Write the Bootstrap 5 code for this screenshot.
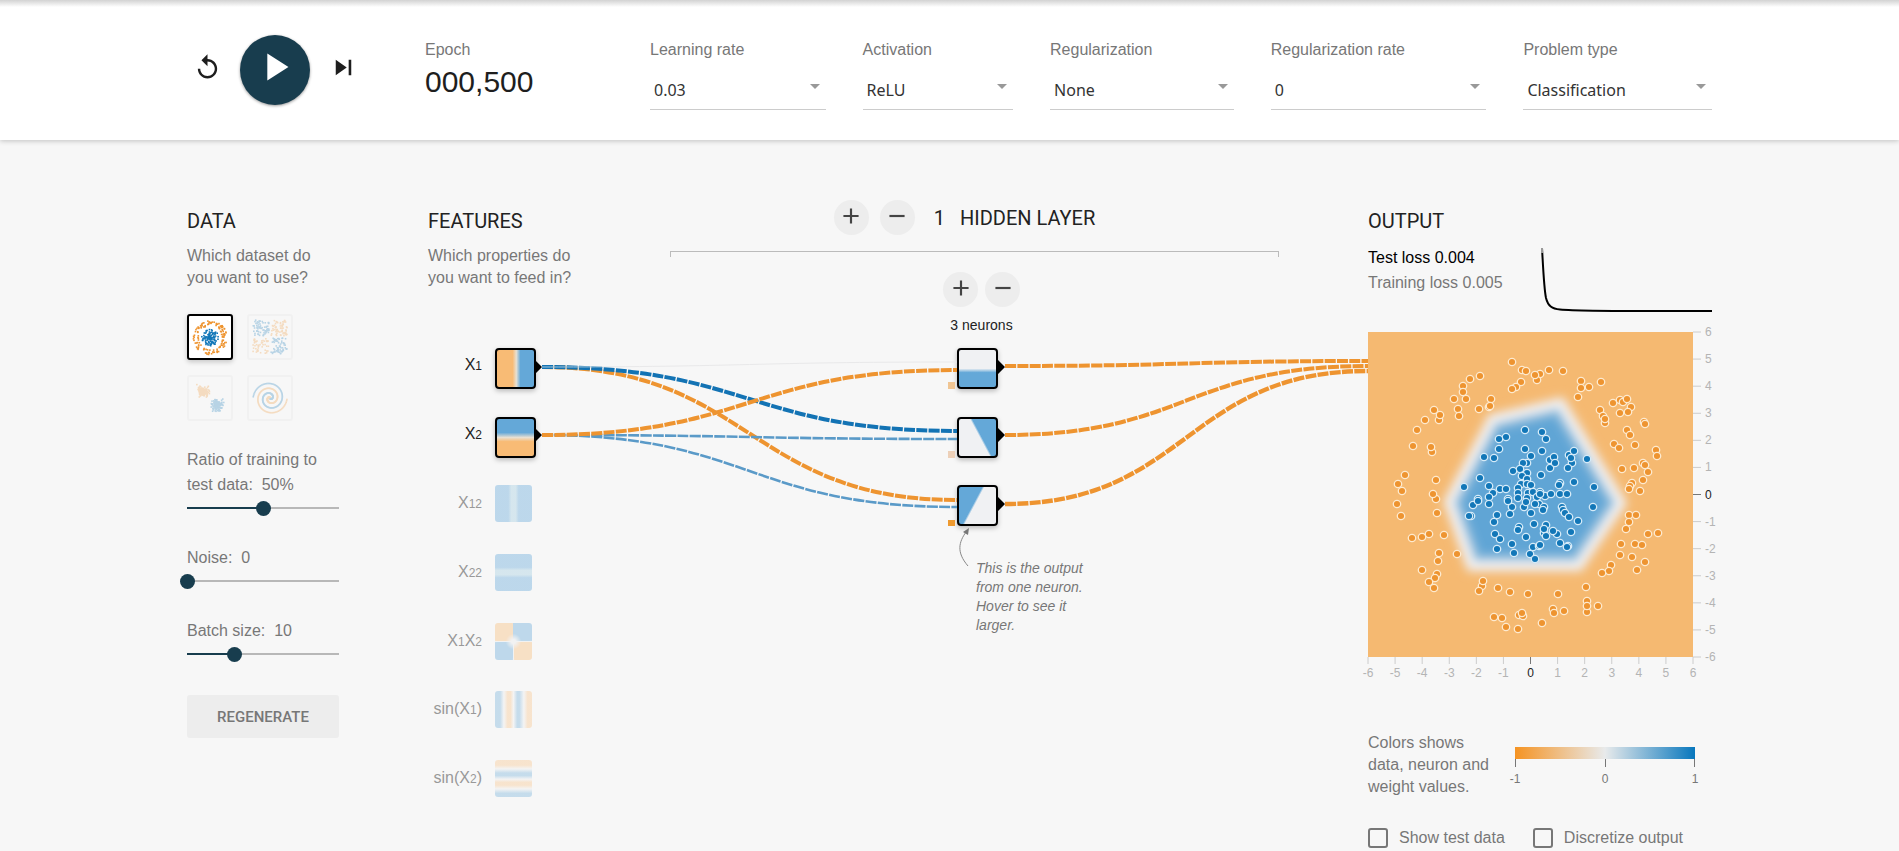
<!DOCTYPE html>
<html lang="en">
<head>
<meta charset="utf-8">
<meta name="viewport" content="width=device-width, initial-scale=1">
<title>Neural network playground</title>
<link href="https://cdn.jsdelivr.net/npm/bootstrap@5.3.0/dist/css/bootstrap.min.css" rel="stylesheet">
<style>
  body { background: #f7f7f7; color: #222; font-family: "Liberation Sans", Arial, sans-serif; font-size: 16px; line-height: 22px; overflow-x: hidden; }
  .page { max-width: 1525px; }
  .topbar { background: linear-gradient(#d2d2d2, #fff 7px); box-shadow: 0 1px 5px rgba(0,0,0,.22); height: 140px; padding-top: 35px; }
  .muted { color: #777; }
  .controls { width: 238px; height: 70px; padding-left: 6px; gap: 18px; }
  .iconbtn { border: 0; background: none; padding: 0 0 6px; line-height: 0; color: #1e1e1e; }
  .playbtn { width: 70px; height: 70px; border-radius: 50%; background: #183d4e; color: #fff; box-shadow: 0 1px 3px rgba(0,0,0,.4); }
  .epoch { width: 225px; padding-top: 4px; }
  .epoch output { display: block; font-size: 30px; line-height: 34px; color: #1e1e1e; padding-top: 4px; }
  .options { display: grid; grid-template-columns: 175fr 150fr 183fr 215fr 188fr; column-gap: 37px; padding-top: 4px; }
  .options label { display: block; margin-bottom: 10px; white-space: nowrap; }
  .options .form-select { height: 39px; padding: 0 20px 0 4px; border: 0; border-bottom: 1px solid #ccc; border-radius: 0; color: #333; font: 16px/22px "Noto Sans", sans-serif;
    background: url("data:image/svg+xml,%3Csvg xmlns='http://www.w3.org/2000/svg' viewBox='0 0 10 5'%3E%3Cpath fill='%23999' d='M0 0h10L5 5z'/%3E%3C/svg%3E") no-repeat right 6px top 13px / 10px 5px; }
  .playground { padding-top: 60px; }
  h2 { font: 400 20px/26px Roboto, sans-serif; color: #222; margin: 0 0 11px; }
  .colhead { padding-top: 8px; }
  .datacol { width: 152px; margin-right: 89px; }
  .thumbs { display: grid; grid-template-columns: 46px 46px; gap: 15px 14px; margin: 25px 0 26px; }
  .thumbbtn { width: 46px; height: 46px; padding: 0; border: 2px solid #e3e3e3; border-radius: 3px; background: #fafafa; opacity: .27; line-height: 0; }
  .thumbbtn.on { border-color: #000; background: #fff; opacity: 1; box-shadow: 0 2px 5px rgba(0,0,0,.2); }
  .thumbbtn svg { width: 100%; height: 100%; }
  .knob { margin-bottom: 29px; }
  .knob label { line-height: 25px; display: block; white-space: nowrap; }
  .knob input { appearance: none; -webkit-appearance: none; display: block; width: calc(100% + 14px); height: 16px; margin: 3px -7px 0;
    background: linear-gradient(90deg, #183d4e var(--v), #b8b8b8 var(--v)) no-repeat center / calc(100% - 14px) 2px; }
  .knob input::-webkit-slider-thumb { -webkit-appearance: none; width: 15px; height: 15px; border-radius: 50%; background: #183d4e; border: 0; }
  .regen { height: 43px; margin-top: 4px; background: #ededed; border: 0; border-radius: 3px; color: #777; font: 500 15px/20px Roboto, sans-serif; }
  .network { min-width: 0; }
  .links { left: 0; top: 0; width: 100%; height: 620px; pointer-events: none; }
  .featcol { width: 145px; white-space: nowrap; }
  .features { height: 453px; margin-top: 59px; }
  .feat { display: grid; grid-template-columns: 54px 42px; column-gap: 13px; height: 41px; padding: 0; border: 0; background: none; text-align: right; color: #222; justify-items: start; }
  .feat > span { width: 100%; line-height: 33px; font-size: 16px; }
  .feat.off > span { line-height: 35px; }
  .feat small { font-size: 12px; }
  .feat i, .neuron { display: block; width: 37px; height: 37px; border-radius: 3px; }
  .feat.off { color: #999; }
  .feat.off i { opacity: .38; }
  .feat.on i, .neuron { width: 41px; height: 41px; border: 2px solid #000; border-radius: 4px; box-shadow: 0 2px 5px rgba(0,0,0,.25); background-origin: border-box; padding: 0; }
  .fx1 { background: linear-gradient(90deg, #f8bb75 43%, #e8e0d2 52%, #64a8d8 62%); }
  .fx2 { background: linear-gradient(#64a8d8 38%, #e8e0d2 50%, #f8bb75 60%); }
  .fx11 { background: linear-gradient(90deg, #5da4d8 36%, #9fcbdf 44%, #9fcbdf 56%, #5da4d8 64%); }
  .fx22 { background: linear-gradient(#5da4d8 36%, #9fcbdf 44%, #9fcbdf 56%, #5da4d8 64%); }
  .fx12 { background: radial-gradient(circle, #e8eaeb 8%, transparent 30%), conic-gradient(#64a8d8 0 24%, #e8eaeb 25%, #f8bb75 26% 49%, #e8eaeb 50%, #64a8d8 51% 74%, #e8eaeb 75%, #f8bb75 76% 99%, #e8eaeb); }
  .fs1 { background: linear-gradient(90deg, #74b0d9 14%, #eee 24%, #f8c48a 34%, #f8c48a 42%, #eee 50%, #74b0d9 60%, #74b0d9 66%, #eee 78%, #f8c48a 88%); }
  .fs2 { background: linear-gradient(#f8c48a 14%, #eee 24%, #74b0d9 35%, #74b0d9 42%, #eee 52%, #f8c48a 60%, #f8c48a 68%, #eee 78%, #74b0d9 90%); }
  .hiddencol { margin: 0 89px 0 97px; min-width: 0; }
  .layerhead { padding-right: 20px; gap: 11px; height: 35px; }
  .layerhead h2 { margin: 0; }
  .roundbtn { width: 35px; height: 35px; border: 0; border-radius: 50%; background: #ededed; padding: 0 0 3px; line-height: 0; color: #444; flex: none; }
  .bracket { height: 6px; margin-top: 16px; border: 1px solid #bbb; border-bottom: 0; }
  .layer { width: 91px; padding-left: 14px; margin-top: 15px; }
  .layer > p { font-size: 14px; line-height: 20px; margin: 8px 0 13px; white-space: nowrap; }
  .neurons { height: 178px; margin-left: 14px; }
  .n1 { background: linear-gradient(#f0f1f3 50%, #64a8d8 61%); }
  .n2 { background: linear-gradient(62deg, #f0f1f3 54%, #64a8d8 58%); }
  .n3 { background: linear-gradient(118deg, #64a8d8 41%, #f0f1f3 45%); }
  .hint { font-size: 14px; line-height: 19px; font-style: italic; margin: 33px 0 0 33px; white-space: nowrap; }
  .outcol { width: 344px; flex: none; }
  .lossrow { height: 87px; line-height: 25px; }
  .lossrow svg, .heat, .scalebar { overflow: visible; display: block; }
  .axis { font-size: 12px; fill: #b4b4b4; }
  .legend { margin-top: 50px; }
  .legend svg { margin: 15px 17px 0 0; }
  .checks { margin-top: 30px; }
  .checks label { display: flex; align-items: center; gap: 11px; line-height: 20px; white-space: nowrap; }
  .checks .form-check-input { width: 20px; height: 20px; margin: 0; border: 2px solid #777; border-radius: 3px; background-color: transparent; }
</style>
</head>
<body>
<header class="topbar">
  <div class="page mx-auto d-flex align-items-start">
    <div class="controls d-flex align-items-center">
      <button class="iconbtn" type="button" aria-label="Reset"><svg width="29" height="29" viewBox="0 0 24 24" fill="currentColor"><path d="M12 5V1L7 6l5 5V7c3.310 0 6 2.690 6 6s-2.690 6-6 6-6-2.690-6-6H4c0 4.420 3.580 8 8 8s8-3.580 8-8-3.580-8-8-8z"/></svg></button>
      <button class="iconbtn playbtn" type="button" aria-label="Run"><svg width="46" height="46" viewBox="0 0 24 24" fill="currentColor"><path d="M8 5v14l11-7z"/></svg></button>
      <button class="iconbtn" type="button" aria-label="Step"><svg width="31" height="31" viewBox="0 0 24 24" fill="currentColor"><path d="M6 18l8.500-6L6 6v12zM16 6v12h2V6h-2z"/></svg></button>
    </div>
    <div class="epoch"><label class="muted d-block" for="epoch">Epoch</label><output id="epoch">000,500</output></div>
    <div class="options flex-grow-1">
      <div><label class="muted" for="lr">Learning rate</label><select class="form-select" id="lr"><option>0.03</option></select></div>
      <div><label class="muted" for="act">Activation</label><select class="form-select" id="act"><option>ReLU</option></select></div>
      <div><label class="muted" for="reg">Regularization</label><select class="form-select" id="reg"><option>None</option></select></div>
      <div><label class="muted" for="regrate">Regularization rate</label><select class="form-select" id="regrate"><option>0</option></select></div>
      <div><label class="muted" for="problem">Problem type</label><select class="form-select" id="problem"><option>Classification</option></select></div>
    </div>
  </div>
</header>

<main class="page mx-auto playground d-flex align-items-start">
  <section class="datacol colhead flex-shrink-0">
    <h2>DATA</h2>
    <div class="muted">Which dataset do<br>you want to use?</div>
    <div class="thumbs">
      <button class="thumbbtn on" type="button" aria-label="Circle"><svg id="t-circle" viewBox="0 0 42 42"></svg></button>
      <button class="thumbbtn" type="button" aria-label="Exclusive or"><svg id="t-xor" viewBox="0 0 42 42"></svg></button>
      <button class="thumbbtn" type="button" aria-label="Gaussian"><svg id="t-gauss" viewBox="0 0 42 42"></svg></button>
      <button class="thumbbtn" type="button" aria-label="Spiral"><svg id="t-spiral" viewBox="0 0 42 42"></svg></button>
    </div>
    <div class="knob muted"><label for="ratio">Ratio of training to<br>test data:&nbsp; 50%</label><input type="range" id="ratio" min="10" max="90" value="50" style="--v:50%"></div>
    <div class="knob muted"><label for="noise">Noise:&nbsp; 0</label><input type="range" id="noise" min="0" max="50" value="0" style="--v:0%"></div>
    <div class="knob muted"><label for="batch">Batch size:&nbsp; 10</label><input type="range" id="batch" min="1" max="30" value="10" style="--v:31%"></div>
    <button class="regen w-100" type="button">REGENERATE</button>
  </section>

  <section class="network position-relative d-flex flex-grow-1">
    <svg class="links position-absolute" viewBox="0 0 940 620" preserveAspectRatio="xMinYMin meet" fill="none">
      <g id="curves"></g>
      <g fill="#000"><path d="M107 160l7 7-7 7zM107 228l7 7-7 7zM570 160l7 7-7 7zM570 228l7 7-7 7zM570 297l7 7-7 7z"/></g>
      <path fill="#f0c593" d="M520 182h7v7h-7z"/><path fill="#edd0b8" d="M520 251h7v7h-7z"/><path fill="#ee9a30" d="M520 320h7v6h-7z"/>
      <path d="M540 366C528 352 531 342 538 332" stroke="#888"/><path fill="#777" d="M541 328l-1 7-5-3z"/>
    </svg>
    <div class="featcol colhead flex-shrink-0">
      <h2>FEATURES</h2>
      <div class="muted">Which properties do<br>you want to feed in?</div>
      <div class="features d-flex flex-column justify-content-between">
        <button type="button" class="feat on"><span>X<small>1</small></span><i class="fx1"></i></button>
        <button type="button" class="feat on"><span>X<small>2</small></span><i class="fx2"></i></button>
        <button type="button" class="feat off"><span>X<small>12</small></span><i class="fx11"></i></button>
        <button type="button" class="feat off"><span>X<small>22</small></span><i class="fx22"></i></button>
        <button type="button" class="feat off"><span>X<small>1</small>X<small>2</small></span><i class="fx12"></i></button>
        <button type="button" class="feat off"><span>sin(X<small>1</small>)</span><i class="fs1"></i></button>
        <button type="button" class="feat off"><span>sin(X<small>2</small>)</span><i class="fs2"></i></button>
      </div>
    </div>
    <div class="hiddencol flex-grow-1">
      <div class="layerhead d-flex align-items-center justify-content-center">
        <button class="roundbtn" type="button" aria-label="Add layer"><svg width="26" height="26" viewBox="0 0 24 24" stroke="currentColor" stroke-width="2"><path d="M5 12h14M12 5v14"/></svg></button>
        <button class="roundbtn" type="button" aria-label="Remove layer"><svg width="26" height="26" viewBox="0 0 24 24" stroke="currentColor" stroke-width="2"><path d="M5 12h14"/></svg></button>
        <h2 class="ms-2">1</h2><h2 class="ms-1">HIDDEN LAYER</h2>
      </div>
      <div class="bracket"></div>
      <div class="layer mx-auto">
        <div class="d-flex justify-content-between">
          <button class="roundbtn" type="button" aria-label="Add neuron"><svg width="26" height="26" viewBox="0 0 24 24" stroke="currentColor" stroke-width="2"><path d="M5 12h14M12 5v14"/></svg></button>
          <button class="roundbtn" type="button" aria-label="Remove neuron"><svg width="26" height="26" viewBox="0 0 24 24" stroke="currentColor" stroke-width="2"><path d="M5 12h14"/></svg></button>
        </div>
        <p class="text-center">3 neurons</p>
        <div class="neurons d-flex flex-column justify-content-between">
          <button class="neuron n1" type="button" aria-label="Neuron 1"></button>
          <button class="neuron n2" type="button" aria-label="Neuron 2"></button>
          <button class="neuron n3" type="button" aria-label="Neuron 3"></button>
        </div>
        <div class="hint muted">This is the output<br>from one neuron.<br>Hover to see it<br>larger.</div>
      </div>
    </div>
  </section>

  <section class="outcol colhead">
    <h2>OUTPUT</h2>
    <div class="lossrow d-flex justify-content-between">
      <div><div class="text-black">Test loss 0.004</div><div class="muted">Training loss 0.005</div></div>
      <svg width="170" height="66" viewBox="0 0 170 66" fill="none"><path d="M0 3C1 20 2 44 4 53C6 61 10 64 18 64.500C40 66.500 80 66 170 66" stroke="#000" stroke-width="2"/><path d="M0 3v5" stroke="#999" stroke-width="2"/></svg>
    </div>
    <svg class="heat" width="344" height="350" viewBox="0 0 344 350">
      <defs>
        <filter id="soft" x="-20%" y="-20%" width="140%" height="140%"><feGaussianBlur stdDeviation="4"/></filter>
        <clipPath id="inside"><path d="M82 170L125 88 192 72 252 171 210 233 104 233z"/></clipPath>
      </defs>
      <rect width="325" height="325" fill="#f5b971"/>
      <g filter="url(#soft)" stroke-linejoin="round">
        <path d="M82 170L125 88 192 72 252 171 210 233 104 233z" fill="#61a5d5" stroke="#f1cfa4" stroke-width="18"/>
        <path d="M82 170L125 88 192 72 252 171 210 233 104 233z" fill="#61a5d5" stroke="#8dbddd" stroke-width="22" clip-path="url(#inside)"/>
        <path d="M82 170L125 88 192 72 252 171 210 233 104 233z" fill="none" stroke="#eff0f1" stroke-width="8"/>
      </g>
      <g id="dots" stroke-width="1.300"></g>
      <g id="axes" class="axis"></g>
    </svg>
    <div class="legend d-flex justify-content-between muted">
      <div class="text-nowrap">Colors shows<br>data, neuron and<br>weight values.</div>
      <svg class="scalebar" width="180" height="40" viewBox="0 0 180 40">
        <defs><linearGradient id="scale"><stop offset="0" stop-color="#f59322"/><stop offset=".5" stop-color="#e8eaeb"/><stop offset="1" stop-color="#0877bd"/></linearGradient></defs>
        <rect width="180" height="12" fill="url(#scale)"/>
        <path d="M.5 12v8M90.500 12v8M179.500 12v8" stroke="#777"/>
        <g font-size="12" fill="#777" text-anchor="middle"><text x="0" y="36">-1</text><text x="90" y="36">0</text><text x="180" y="36">1</text></g>
      </svg>
    </div>
    <div class="checks d-flex muted">
      <label for="showtest" class="me-4"><input class="form-check-input" type="checkbox" id="showtest">Show test data</label>
      <label for="discretize" class="ms-1"><input class="form-check-input" type="checkbox" id="discretize">Discretize output</label>
    </div>
  </section>
</main>

<script src="https://cdn.jsdelivr.net/npm/bootstrap@5.3.0/dist/js/bootstrap.bundle.min.js"></script>
<script>
  const NS = 'http://www.w3.org/2000/svg';
  const ORANGE = '#ee9430', BLUE = '#1277b8';
  function draw(parent, tag, attrs, text) {
    const node = document.createElementNS(NS, tag);
    for (const k in attrs) node.setAttribute(k, attrs[k]);
    if (text !== undefined) node.textContent = text;
    document.getElementById(parent).appendChild(node);
  }

  // Weighted links: x1, y1, x2, y2, colour, thickness
  [[114,167,529,162,'#e9e9ea',1],[114,167,529,300,ORANGE,4],[114,167,529,231,'#1373b4',4],[114,167,529,162,'#a9cade',1,60],
   [114,235,529,307,'#5a9ac8',2.6],[114,235,529,239,'#5a9ac8',2.6],[114,235,529,170,ORANGE,4],
   [577,166,940,161,ORANGE,4],[577,235,940,166,ORANGE,4],[577,304,940,171,ORANGE,4.4]
  ].forEach(([x1,y1,x2,y2,stroke,w,only]) => {
    const m = (x1 + x2) / 2;
    draw('curves', 'path', { d: `M${x1} ${y1}C${m} ${y1} ${m} ${y2} ${x2} ${y2}`, stroke, 'stroke-width': w, 'stroke-dasharray': only ? `${only} 2000` : w > 1 ? '11 1.3' : 'none' });
  });

  // Training points
  const outer = [144,30,154,38,158,39,172,42,169,48,167,43,181,38,195,39,153,50,148,55,144,57,112,44,102,47,95,54,95,60,98,67,86,67,123,67,121,75,122,74,111,77,90,77,91,84,66,78,71,88,72,83,57,88,49,98,45,114,64,120,63,115,37,143,30,152,34,159,68,148,68,167,65,162,
    213,49,213,56,221,55,233,50,210,65,232,78,235,84,237,91,237,87,245,71,252,68,255,70,259,67,263,75,260,80,252,81,276,90,277,92,259,98,262,103,246,112,251,116,267,113,288,118,289,124,254,137,266,136,275,131,277,133,280,140,275,148,264,151,262,154,261,157,272,159,
    29,172,33,184,69,181,44,206,54,205,61,202,76,203,71,221,70,229,89,222,54,238,69,242,67,246,61,250,66,256,114,254,115,249,111,259,130,256,142,260,160,262,126,285,134,286,138,295,150,297,151,283,155,284,154,281,174,291,
    261,183,268,183,261,190,258,197,280,202,290,201,253,212,267,212,274,213,252,223,264,225,277,230,269,238,243,233,241,239,234,241,218,255,190,262,219,269,219,280,219,274,230,274,185,277,186,281,196,279];
  const inner = [157,98,174,100,178,107,138,105,131,107,131,117,157,117,174,119,163,124,116,125,126,126,159,131,155,131,182,128,152,137,145,139,159,141,182,136,154,144,173,143,112,146,159,147,121,154,96,155,153,152,159,152,163,153,132,157,138,157,125,161,121,165,150,156,150,161,150,166,160,161,165,160,172,160,169,165,177,164,172,162,110,167,140,167,159,166,
    186,125,187,131,201,123,206,119,204,131,203,126,200,136,219,127,192,151,191,153,206,150,226,155,183,162,192,162,199,162,
    105,173,110,169,121,172,103,184,101,184,129,183,126,190,144,175,142,182,140,169,156,175,158,170,171,172,167,172,163,181,176,175,175,178,151,195,150,198,166,192,127,202,132,207,144,212,146,221,129,217,158,205,165,215,171,214,162,222,167,227,178,193,176,201,178,204,176,197,
    225,175,194,175,195,178,197,181,201,185,210,189,203,200,189,202,185,199,192,211,200,214,199,215,172,213];
  const dots = (list, fill, stroke) => { for (let i = 0; i < list.length; i += 2) draw('dots', 'circle', { cx: list[i], cy: list[i + 1], r: 3.7, fill, stroke }); };
  dots(outer, ORANGE, '#fdeacf');
  dots(inner, BLUE, '#d6ebf8');

  // Axes
  for (let v = -6; v <= 6; v++) {
    const p = 162.5 + v * 325 / 12, q = 325 - p, ink = v ? {} : { style: 'fill:#222' };
    draw('axes', 'path', { d: `M${p} 325v7M325 ${q}h8`, stroke: v ? '#ccc' : '#777' });
    draw('axes', 'text', { x: p, y: 345, 'text-anchor': 'middle', ...ink }, v);
    draw('axes', 'text', { x: 337, y: q + 4, ...ink }, v);
  }

  // Data set thumbnails
  let seed = 7;
  const rnd = () => (seed = (seed * 16807) % 2147483647) / 2147483647;
  const dot = (id, x, y, fill) => draw(id, 'rect', { x: x - .7, y: y - .7, width: 1.6, height: 1.6, fill });
  for (let i = 0; i < outer.length; i += 2) dot('t-circle', 21 + (outer[i] - 162) / 8, 21.5 + (outer[i + 1] - 162) / 8, ORANGE);
  for (let i = 0; i < inner.length; i += 2) dot('t-circle', 21 + (inner[i] - 162) / 8, 21.5 + (inner[i + 1] - 162) / 8, BLUE);
  for (let i = 0; i < 260; i++) {
    const x = rnd() * 34 - 17, y = rnd() * 34 - 17;
    if (Math.abs(x) > 1 && Math.abs(y) > 1) dot('t-xor', 21 + x, 21 + y, x * y > 0 ? BLUE : ORANGE);
    const g = (rnd() + rnd() + rnd() - 1.5) * 5, h = (rnd() + rnd() + rnd() - 1.5) * 5, s = i % 2 ? 7 : -7;
    dot('t-gauss', 21 + s + g, 21 + s + h, s > 0 ? BLUE : ORANGE);
    const t = (i >> 1) / 130, a = t * 11 + (i % 2 ? Math.PI : 0);
    dot('t-spiral', 21 + 17 * t * Math.sin(a), 21 + 17 * t * Math.cos(a), i % 2 ? ORANGE : BLUE);
  }
</script>
</body>
</html>
